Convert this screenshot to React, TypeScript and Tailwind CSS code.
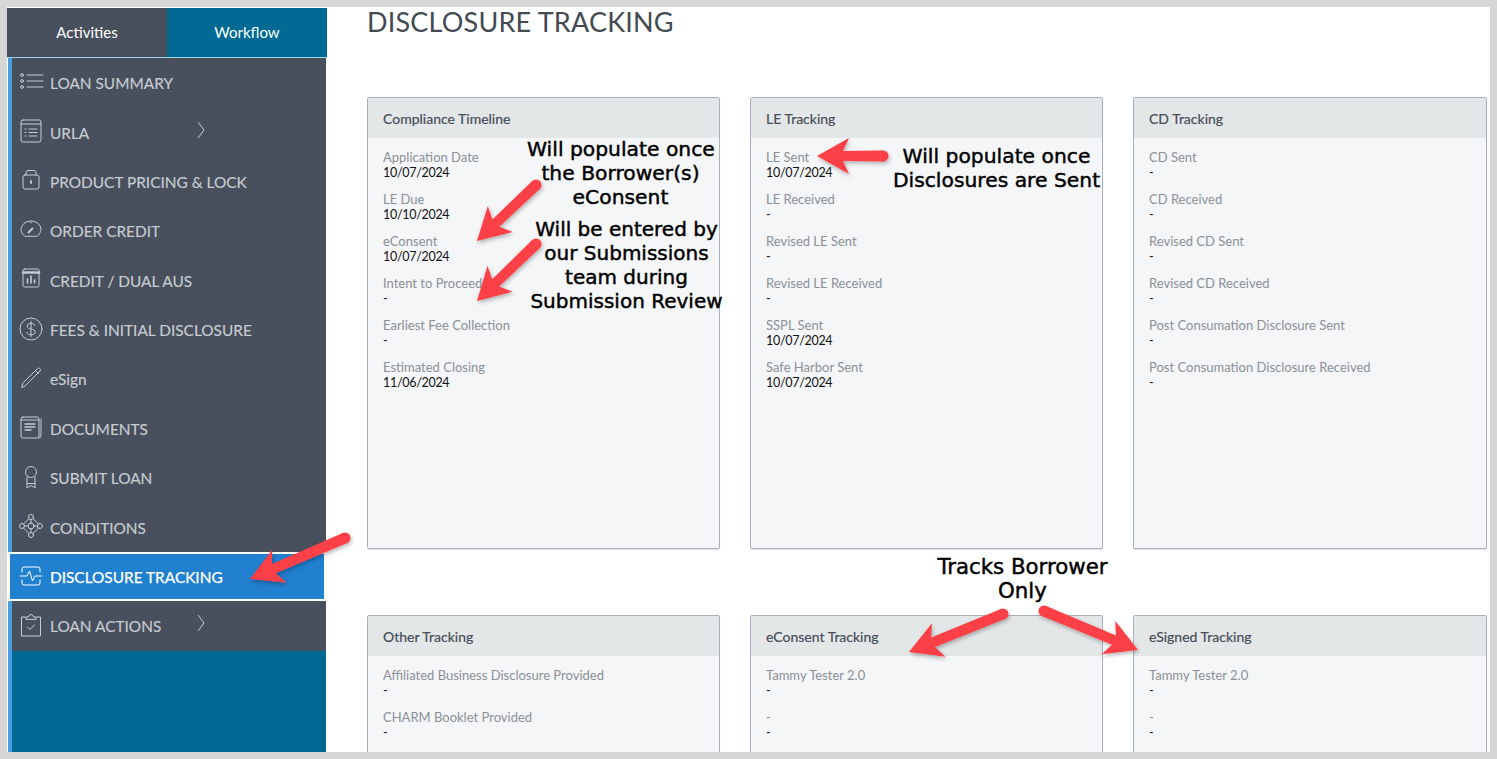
const sans = "font-['Lato','Open_Sans',sans-serif]";

const Ico = ({ children }: { children: React.ReactNode }) => (
  <svg width={28} height={28} viewBox="0 0 28 28" fill="none" stroke="currentColor" strokeWidth="1" strokeLinecap="round" strokeLinejoin="round">
    {children}
  </svg>
);

const icons: Record<string, React.ReactNode> = {
  list: (
    <>
      <circle cx="5" cy="7" r="1.400" /><circle cx="5" cy="13" r="1.400" /><circle cx="5" cy="19" r="1.400" />
      <path d="M10 7h16M10 13h16M10 19h16" />
    </>
  ),
  urla: (
    <>
      <rect x="4" y="3" width="20" height="22" rx="2" />
      <path d="M4 7h20M8 12h1M12 12h8M8 15.500h1M12 15.500h8M8 19h1M12 19h8" />
    </>
  ),
  lock: (
    <>
      <rect x="6" y="9" width="16" height="14" rx="2" />
      <path d="M9 9V6.500a2 2 0 0 1 2-2h6a2 2 0 0 1 2 2V9" />
      <path d="M14 15v2" strokeWidth="1.800" />
    </>
  ),
  gauge: (
    <>
      <path d="M7.500 20C4.500 17 4 15 4 13.500A10 8.500 0 0 1 24 13.500C24 15 23.500 17 20.500 20Z" />
      <path d="M11.500 16.500l4-4" strokeWidth="1.800" />
      <path d="M14 6v1" />
    </>
  ),
  chart: (
    <>
      <rect x="6" y="4" width="16" height="18" rx="1.500" />
      <path d="M6 7.500h16" strokeWidth="2.500" />
      <path d="M10.500 18v-4M14 18v-7M17.500 18v-3" strokeWidth="1.600" />
    </>
  ),
  dollar: (
    <>
      <circle cx="14" cy="14" r="11" />
      <path d="M18 10.500c-.6-1.500-2-2.200-4-2.200-2.300 0-3.800 1.200-3.800 2.900 0 4 8 2 8 5.800 0 1.800-1.700 2.800-4.200 2.800-2.200 0-3.700-.9-4.200-2.500M14 6.500v15" />
    </>
  ),
  pen: (
    <>
      <path d="M6 19 20.500 4.500a1.500 1.500 0 0 1 2.200 0l.3.300a1.500 1.500 0 0 1 0 2.200L8.500 21.500 5 23.500z" />
      <path d="M18.500 6.500l3 3" />
    </>
  ),
  docs: (
    <>
      <rect x="4" y="4" width="18" height="21" rx="2" />
      <path d="M24 6v17a2 2 0 0 1-2 2M4 7h18" />
      <path d="M8 11h10M8 14h10M8 17h6" strokeWidth="1.300" />
    </>
  ),
  ribbon: (
    <>
      <circle cx="14" cy="9" r="5.500" strokeDasharray="3 .6" />
      <path d="M10 14v11l4-2.500 4 2.500V14" />
      <path d="M10 20.500h8" />
    </>
  ),
  nodes: (
    <>
      <circle cx="14" cy="14" r="3" /><circle cx="14" cy="5" r="2.500" /><circle cx="14" cy="23" r="2.500" /><circle cx="5" cy="14" r="2.500" /><circle cx="23" cy="14" r="2.500" />
      <path d="M14 7.500v4M14 16.500v4M7.500 14h4M16.500 14h4M12 6.500 6.500 12M16 6.500l5.500 5.500M12 21.500 6.500 16M16 21.500l5.500-5.500" />
    </>
  ),
  pulse: (
    <>
      <path d="M5 10V7a2 2 0 0 1 2-2h14a2 2 0 0 1 2 2v3M5 18v3a2 2 0 0 0 2 2h14a2 2 0 0 0 2-2v-3" />
      <path d="M3 14h7l2.500-5 3 10 2.500-5h7" />
    </>
  ),
  clip: (
    <>
      <path d="M9 6H4.500v19h19V6H19" />
      <path d="M9 8V6.500l3-1a2 2 0 0 1 4 0l3 1V8z" />
      <path d="M10.500 16l2.500 2.500 4.500-4.500" />
    </>
  ),
};

type Nav = { icon: string; label: string; chevron?: boolean; active?: boolean };
const nav: Nav[] = [
  { icon: "list", label: "LOAN SUMMARY" },
  { icon: "urla", label: "URLA", chevron: true },
  { icon: "lock", label: "PRODUCT PRICING & LOCK" },
  { icon: "gauge", label: "ORDER CREDIT" },
  { icon: "chart", label: "CREDIT / DUAL AUS" },
  { icon: "dollar", label: "FEES & INITIAL DISCLOSURE" },
  { icon: "pen", label: "eSign" },
  { icon: "docs", label: "DOCUMENTS" },
  { icon: "ribbon", label: "SUBMIT LOAN" },
  { icon: "nodes", label: "CONDITIONS" },
  { icon: "pulse", label: "DISCLOSURE TRACKING", active: true },
  { icon: "clip", label: "LOAN ACTIONS", chevron: true },
];

type F = [string, string];
const cardsTop: { title: string; fields: F[] }[] = [
  {
    title: "Compliance Timeline",
    fields: [
      ["Application Date", "10/07/2024"],
      ["LE Due", "10/10/2024"],
      ["eConsent", "10/07/2024"],
      ["Intent to Proceed", "-"],
      ["Earliest Fee Collection", "-"],
      ["Estimated Closing", "11/06/2024"],
    ],
  },
  {
    title: "LE Tracking",
    fields: [
      ["LE Sent", "10/07/2024"],
      ["LE Received", "-"],
      ["Revised LE Sent", "-"],
      ["Revised LE Received", "-"],
      ["SSPL Sent", "10/07/2024"],
      ["Safe Harbor Sent", "10/07/2024"],
    ],
  },
  {
    title: "CD Tracking",
    fields: [
      ["CD Sent", "-"],
      ["CD Received", "-"],
      ["Revised CD Sent", "-"],
      ["Revised CD Received", "-"],
      ["Post Consumation Disclosure Sent", "-"],
      ["Post Consumation Disclosure Received", "-"],
    ],
  },
];
const cardsBottom: { title: string; fields: F[] }[] = [
  {
    title: "Other Tracking",
    fields: [
      ["Affiliated Business Disclosure Provided", "-"],
      ["CHARM Booklet Provided", "-"],
    ],
  },
  { title: "eConsent Tracking", fields: [["Tammy Tester 2.0", "-"], ["-", "-"]] },
  { title: "eSigned Tracking", fields: [["Tammy Tester 2.0", "-"], ["-", "-"]] },
];

function Card({ title, fields, tall }: { title: string; fields: F[]; tall?: boolean }) {
  return (
    <div className={`${tall ? "h-[452px]" : "h-[200px]"} rounded-[2px] border border-[#a9b1bd] bg-[#f5f6f8] shadow-[0_1px_1px_rgba(0,0,0,0.12)]`}>
      <div className="flex h-[40px] items-center bg-[#e4e7e8] pl-[15px] text-[14px] text-[#454d58] [-webkit-text-stroke:0.2px_#454d58]">{title}</div>
      <div className="flex flex-col gap-[10px] pt-[11px] pl-[15px] text-[13px] leading-[16px]">
        {fields.map(([l, v], i) => (
          <div key={i}>
            <div className="text-[#8b9096]">{l}</div>
            <div className="text-[12.5px] tracking-[-0.3px] text-[#111]">{v}</div>
          </div>
        ))}
      </div>
    </div>
  );
}

const Note = ({ className, children }: { className: string; children: React.ReactNode }) => (
  <div className={`absolute text-center font-['DejaVu_Sans',sans-serif] leading-[24px] font-normal whitespace-nowrap text-black [-webkit-text-stroke:0.45px_black] ${className}`}>
    {children}
  </div>
);

function Arrow({ x1, y1, x2, y2 }: { x1: number; y1: number; x2: number; y2: number }) {
  const a = Math.atan2(y2 - y1, x2 - x1);
  const ux = Math.cos(a), uy = Math.sin(a);
  const nx = -uy, ny = ux;
  const at = (d: number, o: number) => `${x2 - ux * d + nx * o},${y2 - uy * d + ny * o}`;
  const len = Math.hypot(x2 - x1, y2 - y1);
  const pts = [
    at(0, 0),
    at(32, 18),
    at(26, 5),
    at(len, 5.5),
    at(len, -5.5),
    at(26, -5),
    at(32, -18),
  ].join(" ");
  return (
    <g fill="#fb4046">
      <polygon points={pts} />
      <circle cx={x1} cy={y1} r={5.5} />
    </g>
  );
}

export default function App() {
  return (
    <div className={`h-[759px] w-[1497px] overflow-hidden bg-[#d6d6d6] pt-[7px] ${sans}`}>
      <div className="mx-[7px] flex h-[745px] bg-white pt-px">
        <aside className="flex h-full w-[320px] shrink-0 flex-col">
          <div className="flex h-[50px] shrink-0 border-b border-[#9fd4e8] bg-[#006a94] text-[15px] text-white">
            <div className="flex flex-1 items-center justify-center bg-[#47505c]">Activities</div>
            <div className="flex flex-1 items-center justify-center">Workflow</div>
          </div>
          <div className="mr-px ml-px flex flex-1 flex-col border-l-[4px] border-l-[#4a9fe3] bg-[#006a94]">
            <nav className="flex flex-col">
              {nav.map((n) => (
                <div
                  key={n.label}
                  className={
                    n.active
                      ? "relative -ml-[4px] flex h-[49.4px] items-center border-2 border-white bg-[#2180cf] pl-[7px] text-white"
                      : "relative flex h-[49.4px] items-center bg-[#47505c] pl-[5px] text-[#c8ccd2]"
                  }
                >
                  <span className="-translate-y-[1px]">
                    <Ico>{icons[n.icon]}</Ico>
                  </span>
                  <span className={`ml-[5px] translate-y-[1px] text-[15.4px] whitespace-nowrap ${n.active ? "[-webkit-text-stroke:0.25px_white]" : "[-webkit-text-stroke:0.15px_#c8ccd2]"}`}>{n.label}</span>
                  {n.chevron && (
                    <svg className="absolute left-[184px] -mt-[5px]" width="10" height="18" viewBox="0 0 10 18" fill="none" stroke="#c8ccd2" strokeWidth="1">
                      <path d="M2 1l6 8-6 8" />
                    </svg>
                  )}
                </div>
              ))}
            </nav>
          </div>
        </aside>
        <main className="flex-1 pl-[40px]">
          <h1 className="h-[89px] text-[27px] leading-[28px] font-normal tracking-[0.2px] text-[#444a52]">DISCLOSURE TRACKING</h1>
          <div className="h-[655px] overflow-hidden">
            <div className="grid grid-cols-[353px_353px_354px] gap-x-[30px] gap-y-[66px]">
              {cardsTop.map((c) => <Card key={c.title} {...c} tall />)}
              {cardsBottom.map((c) => <Card key={c.title} {...c} />)}
            </div>
          </div>
        </main>
      </div>

      <Note className="top-[137px] left-[527px] w-[187px] text-[20.3px]">Will populate once<br />the Borrower(s)<br />eConsent</Note>
      <Note className="top-[217px] left-[528px] w-[197px] text-[20px]">Will be entered by<br />our Submissions<br />team during<br />Submission Review</Note>
      <Note className="top-[144px] left-[892px] w-[209px] text-[20.3px]">Will populate once<br />Disclosures are Sent</Note>
      <Note className="top-[555px] left-[937px] w-[171px] text-[21.3px]">Tracks Borrower<br />Only</Note>

      <svg className="pointer-events-none absolute top-0 left-0" width="1497" height="759">
        <defs>
          <filter id="sh" x="-20%" y="-20%" width="140%" height="140%">
            <feDropShadow dx="1" dy="2" stdDeviation="2" floodColor="#000" floodOpacity="0.3" />
          </filter>
        </defs>
        <g filter="url(#sh)">
          <Arrow x1={536} y1={185} x2={477} y2={241} />
          <Arrow x1={536} y1={244} x2={477} y2={301} />
          <Arrow x1={883} y1={156} x2={817} y2={156} />
          <Arrow x1={345} y1={538} x2={250} y2={579} />
          <Arrow x1={1003} y1={614} x2={909} y2={652} />
          <Arrow x1={1044} y1={611} x2={1138} y2={650} />
        </g>
      </svg>
    </div>
  );
}
